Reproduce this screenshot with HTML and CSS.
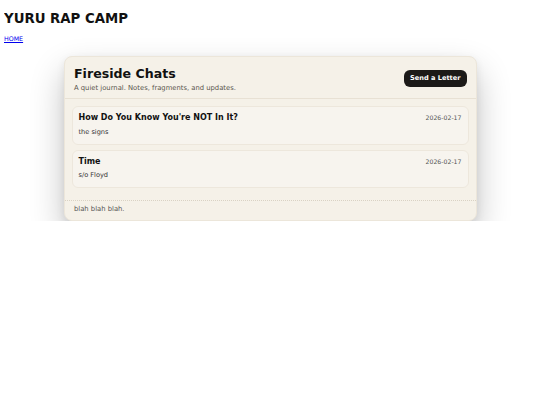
FILE: index.html
```html
<!DOCTYPE html>
<html>
<head>
<meta charset="utf-8">
<link rel="stylesheet" href="styles.css">
</head>
<body>
<h1 class="site-title">YURU RAP CAMP</h1>
<p class="nav"><a href="#">HOME</a></p>
<main class="card">
  <header class="card-head">
    <div class="head-text">
      <h2 class="card-title">Fireside Chats</h2>
      <p class="card-sub">A quiet journal. Notes, fragments, and updates.</p>
    </div>
    <button class="btn">Send a Letter</button>
  </header>
  <section class="entries">
    <article class="entry">
      <div class="entry-top">
        <h3 class="entry-title">How Do You Know You're NOT In It?</h3>
        <span class="entry-date">2026-02-17</span>
      </div>
      <p class="entry-desc">the signs</p>
    </article>
    <article class="entry">
      <div class="entry-top">
        <h3 class="entry-title">Time</h3>
        <span class="entry-date">2026-02-17</span>
      </div>
      <p class="entry-desc">s/o Floyd</p>
    </article>
  </section>
  <footer class="card-foot">blah blah blah.</footer>
</main>
</body>
</html>
```
FILE: styles.css
```css
html, body {
  background: #ffffff;
}
body {
  margin: 4px;
  font-family: "DejaVu Sans", Verdana, sans-serif;
  color: #111;
}
.site-title {
  font-size: 13.3px;
  font-weight: bold;
  margin: 7px 0 9px;
}
.nav {
  font-size: 6.3px;
  margin: 0;
}
.nav a {
  color: #0000ee;
}
.card {
  max-width: 411px;
  margin: 14px auto 0;
  background: #f5f1e8;
  border: 1px solid #ece6da;
  border-radius: 8px;
  box-shadow: 0 16px 34px rgba(0, 0, 0, 0.24), 0 3px 8px rgba(0, 0, 0, 0.08);
  overflow: hidden;
}
.card-head {
  display: flex;
  justify-content: space-between;
  align-items: center;
  padding: 8.8px 9px 6.4px 9.5px;
  border-bottom: 1px solid #e8e1d4;
}
.card-title {
  margin: 0;
  font-size: 12.6px;
  font-weight: bold;
  color: #111;
}
.card-sub {
  margin: 2.8px 0 0;
  font-size: 6.8px;
  color: #5a554d;
}
.btn {
  font-family: "DejaVu Sans", Verdana, sans-serif;
  font-size: 6.6px;
  font-weight: bold;
  color: #fff;
  background: #1c1a18;
  border: none;
  border-radius: 6px;
  padding: 4.6px 6px;
  margin-top: -1px;
}
.entries {
  display: flex;
  flex-direction: column;
  gap: 5px;
  padding: 7.4px 7px 11.6px;
}
.entry {
  background: #f7f4ee;
  border: 1px solid #ede7dc;
  border-radius: 6px;
  padding: 6px 6px 8px;
}
.entry-top {
  display: flex;
  justify-content: space-between;
  align-items: baseline;
}
.entry-title {
  margin: 0;
  font-size: 8px;
  font-weight: bold;
  color: #111;
}
.entry-date {
  font-size: 6.2px;
  color: #555;
}
.entry-desc {
  margin: 5.3px 0 0;
  font-size: 6.6px;
  color: #333;
}
.card-foot {
  border-top: 1px dotted #d9d2c4;
  padding: 4.7px 9.5px 7px;
  font-size: 6.8px;
  color: #555;
}
```
